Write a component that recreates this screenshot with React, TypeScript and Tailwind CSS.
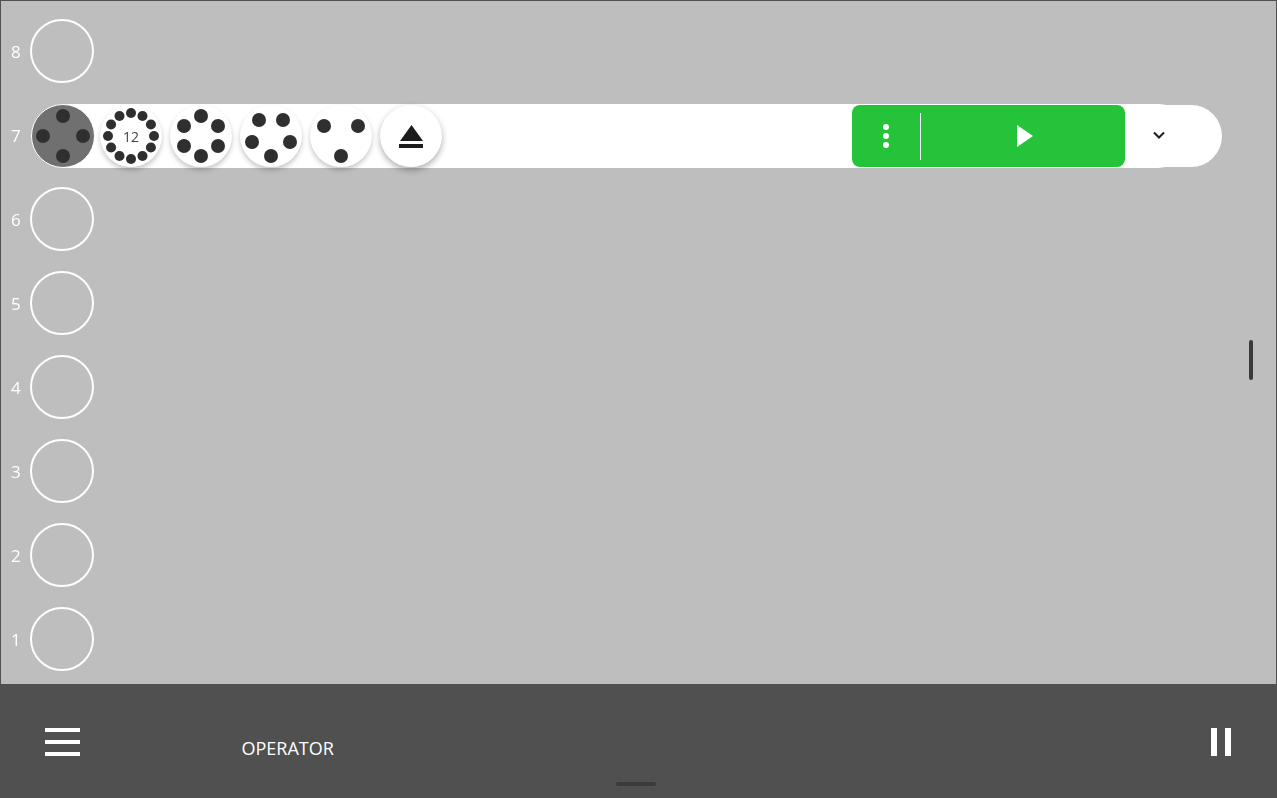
type Dot = [number, number];

const twelve: Dot[] = Array.from({ length: 12 }, (_, i) => {
  const a = (i * Math.PI) / 6;
  return [31 + 23 * Math.sin(a), 31 - 23 * Math.cos(a)];
});

const wheels: { dots: Dot[]; r: number }[] = [
  { dots: twelve, r: 5 },
  { dots: [[31, 11], [48, 21], [48, 41], [31, 51], [14, 41], [14, 21]], r: 7 },
  { dots: [[19, 15], [43, 15], [12, 37], [50, 37], [31, 51]], r: 7 },
  { dots: [[14, 21], [48, 21], [31, 51]], r: 7 },
];

function Dots({ dots, r }: { dots: Dot[]; r: number }) {
  return (
    <svg viewBox="0 0 62 62" className="absolute inset-0 h-[62px] w-[62px]">
      {dots.map(([cx, cy], i) => (
        <circle key={i} cx={cx} cy={cy} r={r} fill="#2f2f2f" />
      ))}
    </svg>
  );
}

function Row({ n, children }: { n: number; children?: React.ReactNode }) {
  return (
    <div className="flex h-[84px] items-center">
      <span className="w-[29px] pl-[10px] text-[17px] leading-none text-white will-change-transform">{n}</span>
      {children ?? <div className="h-16 w-16 rounded-full border-2 border-white" />}
    </div>
  );
}

function ActiveRow() {
  return (
    <div className="relative ml-px mt-[2px] flex flex-1 items-center">
      {/* white tray behind the wheels */}
      <div className="absolute left-[31px] top-0 h-16 w-[1128px] rounded-r-full bg-white" />
      <div className="absolute left-[1099px] top-px h-[62px] w-[92px] rounded-r-full bg-white" />

      <div className="relative flex h-16 w-16 items-center justify-center rounded-full border border-white bg-[#707070]">
        <svg viewBox="0 0 62 62" className="h-[62px] w-[62px]">
          <circle cx="31" cy="11" r="7" fill="#2f2f2f" />
          <circle cx="51" cy="31" r="7" fill="#2f2f2f" />
          <circle cx="31" cy="51" r="7" fill="#2f2f2f" />
          <circle cx="11" cy="31" r="7" fill="#2f2f2f" />
        </svg>
      </div>

      <div className="relative ml-[5px] flex gap-2">
        {wheels.map((w, i) => (
          <div key={i} className="relative h-[62px] w-[62px] rounded-full bg-white shadow-[0_3px_5px_rgba(0,0,0,0.22)]">
            <Dots dots={w.dots} r={w.r} />
            {i === 0 && (
              <span className="absolute inset-0 flex items-center justify-center text-[14px] text-[#444] will-change-transform">12</span>
            )}
          </div>
        ))}
        <div className="flex h-[62px] w-[62px] items-center justify-center rounded-full bg-white shadow-[0_3px_6px_rgba(0,0,0,0.32)]">
          <svg viewBox="0 0 26 26" className="h-[26px] w-[26px]">
            <path d="M13.5 2 L25 18 H2 Z" fill="#1c1c1c" />
            <rect x="1" y="21" width="24" height="4" fill="#1c1c1c" />
          </svg>
        </div>
      </div>

      <div className="relative ml-[410px] flex h-[62px] w-[273px] items-center rounded-lg bg-[#25c339]">
        <div className="flex w-[68px] items-center justify-center">
          <div className="flex flex-col gap-[3px]">
            <span className="h-[6px] w-[6px] rounded-full bg-white" />
            <span className="h-[6px] w-[6px] rounded-full bg-white" />
            <span className="h-[6px] w-[6px] rounded-full bg-white" />
          </div>
        </div>
        <div className="h-[47px] w-px bg-white" />
        <div className="flex flex-1 items-center justify-center pl-[4px]">
          <svg viewBox="0 0 16 22" className="h-[22px] w-4">
            <path d="M0 0 L16 11 L0 22 Z" fill="#fff" />
          </svg>
        </div>
      </div>

      <svg viewBox="0 0 14 10" className="relative mb-[2px] ml-[27px] h-[10px] w-[14px]">
        <path d="M2 2.5 L7 7.5 L12 2.5" fill="none" stroke="#1c1c1c" strokeWidth="2" />
      </svg>
    </div>
  );
}

export default function App() {
  return (
    <div className="flex h-[798px] w-full flex-col bg-[#505050] font-['Open_Sans',sans-serif]">
      <main className="relative mx-px mt-px flex h-[683px] flex-col bg-[#bebebe] pt-2">
        {[8, 7, 6, 5, 4, 3, 2, 1].map((n) =>
          n === 7 ? (
            <Row key={n} n={n}>
              <ActiveRow />
            </Row>
          ) : (
            <Row key={n} n={n} />
          ),
        )}
        <div className="absolute left-[1248px] top-[339px] h-10 w-1 rounded-sm bg-[#3a3a3a]" />
      </main>

      <footer className="relative flex flex-1 items-start pl-[45px] pr-[46px] pt-[44px]">
        <div className="flex w-[35px] flex-col gap-2">
          <span className="h-1 bg-white" />
          <span className="h-1 bg-white" />
          <span className="h-1 bg-white" />
        </div>
        <span className="ml-[161.5px] mt-[7px] text-[18px] leading-[26px] text-white">OPERATOR</span>
        <div className="ml-auto flex gap-2">
          <span className="h-7 w-[6px] bg-white" />
          <span className="h-7 w-[6px] bg-white" />
        </div>
        <div className="absolute bottom-3 left-[616px] h-1 w-10 rounded-sm bg-[#3c3c3c]" />
      </footer>
    </div>
  );
}
